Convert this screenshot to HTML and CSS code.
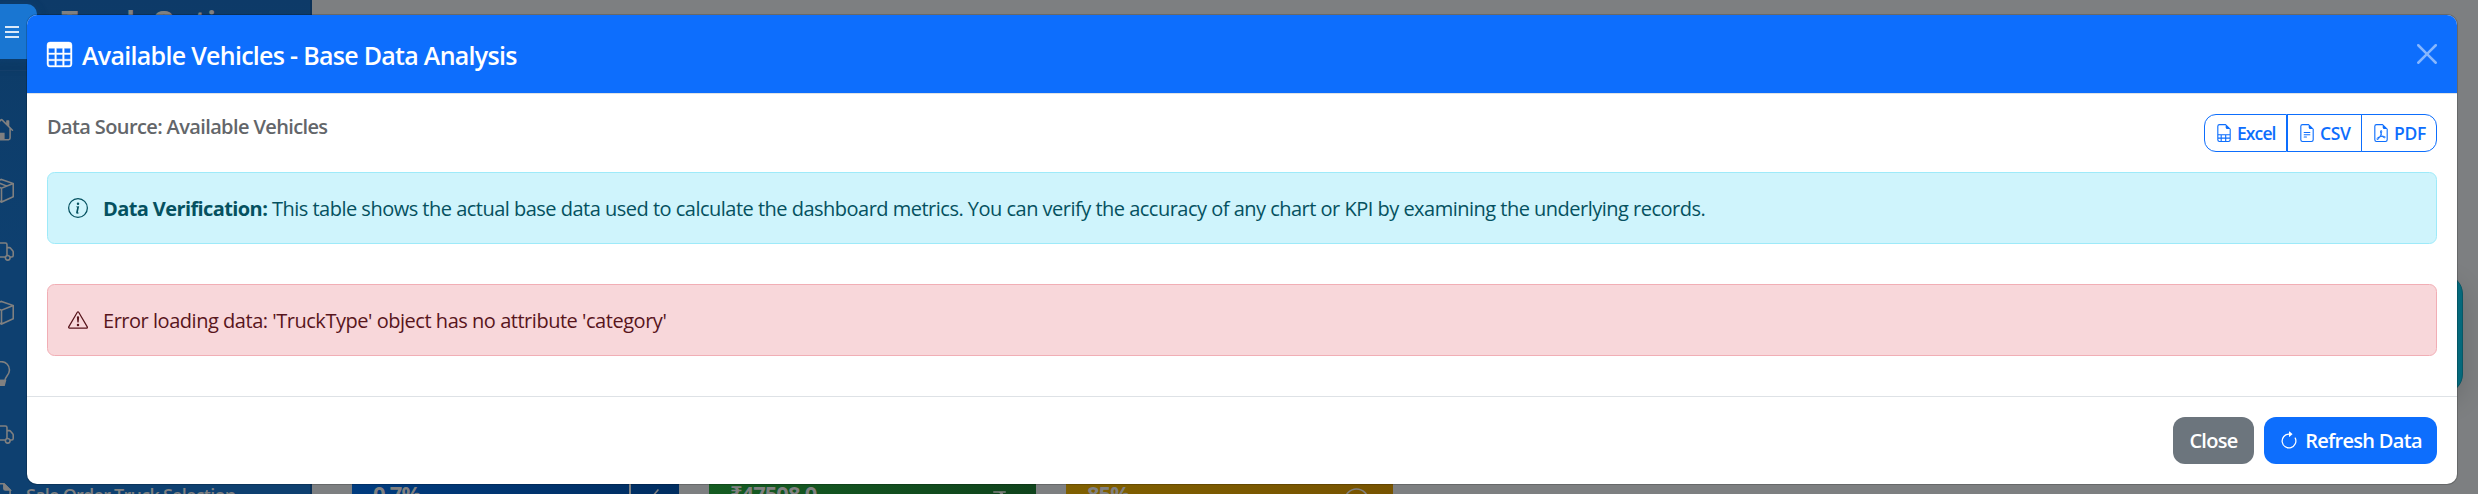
FILE: index.html
```
<!DOCTYPE html>
<html lang="en">
<head>
<meta charset="utf-8">
<title>Available Vehicles - Base Data Analysis</title>
<link rel="stylesheet" href="styles.css">
</head>
<body>
<svg class="defs" aria-hidden="true">
  <symbol id="truck" viewBox="0 0 16 16"><path d="M0 3.5A1.5 1.5 0 0 1 1.5 2h9A1.5 1.5 0 0 1 12 3.5V5h1.02a1.5 1.5 0 0 1 1.17.563l1.481 1.85a1.5 1.5 0 0 1 .329.938V10.500a1.500 1.500 0 0 1-1.500 1.500H14a2 2 0 1 1-4 0H5a2 2 0 1 1-3.998-.085A1.500 1.500 0 0 1 0 10.500zm1.294 7.456A2 2 0 0 1 4.732 11h5.536a2 2 0 0 1 .732-.732V3.500a.5.5 0 0 0-.5-.5h-9a.5.5 0 0 0-.5.5v7a.5.5 0 0 0 .294.456M12 10a2 2 0 0 1 1.732 1h.768a.5.5 0 0 0 .5-.5V8.350a.5.5 0 0 0-.11-.312l-1.480-1.850A.5.5 0 0 0 13.020 6H12zm-9 1a1 1 0 1 0 0 2 1 1 0 0 0 0-2m9 0a1 1 0 1 0 0 2 1 1 0 0 0 0-2"/></symbol>
</svg>
<div class="page">
  <aside class="sidebar">
    <div class="brand">Truck Option</div>
    <nav class="menu">
      <svg viewBox="0 0 16 16"><path d="M8.707 1.500a1 1 0 0 0-1.414 0L.646 8.146a.5.5 0 0 0 .708.708L2 8.207V13.500A1.500 1.500 0 0 0 3.500 15h9a1.500 1.500 0 0 0 1.500-1.500V8.207l.646.647a.5.5 0 0 0 .708-.708L13 5.793V2.500a.5.5 0 0 0-.5-.5h-1a.5.5 0 0 0-.5.5v1.293zM13 7.207V13.500a.5.5 0 0 1-.5.5H10V10H6v4H3.500a.5.5 0 0 1-.5-.5V7.207l5-5z"/></svg>
      <svg viewBox="0 0 16 16" class="line"><path d="M8 .9 15.500 3.500V12L8 15.400.5 12V3.500zM.5 3.500 8 6.500l7.500-3M8 6.500v8.900M4 2.200l7.500 3"/></svg>
      <svg><use href="#truck"/></svg>
      <svg viewBox="0 0 16 16" class="line"><path d="M8 .9 15.500 3.500V12L8 15.400.5 12V3.500zM.5 3.500 8 6.500l7.500-3M8 6.500v8.900"/></svg>
      <svg viewBox="0 0 16 16" class="line"><path d="M5.800 12.500C5.800 10 2.500 9 2.500 5.700a5.300 5.300 0 0 1 10.600 0C13.100 9 10.200 10 10.200 12.500z"/><path class="solid" d="M5.500 12.500h5l-.8 3H6.300z"/></svg>
      <svg><use href="#truck"/></svg>
      <svg viewBox="0 0 16 16" class="line"><path d="M9.500.5H4A1.500 1.500 0 0 0 2.500 2v12A1.500 1.500 0 0 0 4 15.500h8a1.500 1.500 0 0 0 1.500-1.500V4.500z"/><path class="solid" d="M9.500.5v3a1 1 0 0 0 1 1h3z"/></svg>
    </nav>
    <div class="menu-label">Sale Order Truck Selection</div>
  </aside>
  <main class="board">
    <section class="kpi blue"><span class="value">0.7%</span><i class="rule"></i><svg viewBox="0 0 16 16" class="line"><path d="M10.500 1 7.500 4.500"/></svg></section>
    <section class="kpi green"><span class="value">₹47508.0</span><svg viewBox="0 0 16 16"><path d="M4 3.060h2.726c1.220 0 2.120.575 2.325 1.724H4v1.051h5.051C8.855 7.001 8 7.558 6.788 7.558H4v1.317L8.437 14h2.110L6.095 8.884h.855c2.316-.018 3.465-1.476 3.688-3.049H12V4.784h-1.345c-.080-.778-.357-1.335-.793-1.732H12V2H4z"/></svg></section>
    <section class="kpi amber"><span class="value">85%</span><svg viewBox="0 0 16 16" class="line"><circle cx="8" cy="8" r="7.400"/><path d="M8 4v4"/></svg></section>
  </main>
  <div class="teal-card"></div>
  <div class="toggle"><i></i><i></i><i></i></div>
</div>

<div class="modal">
  <header class="modal-header">
    <svg class="table-icon" viewBox="0 0 16 16"><path d="M0 2a2 2 0 0 1 2-2h12a2 2 0 0 1 2 2v12a2 2 0 0 1-2 2H2a2 2 0 0 1-2-2zm15 2h-4v3h4zm0 4h-4v3h4zm0 4h-4v3h3a1 1 0 0 0 1-1zm-5 3v-3H6v3zm-5 0v-3H1v2a1 1 0 0 0 1 1zm-4-4h4V8H1zm0-4h4V4H1zm5-3v3h4V4zm4 4H6v3h4z"/></svg>
    <h5 class="title"><span>Available Vehicles - Base Data Analysis</span></h5>
    <svg class="close-icon" viewBox="0 0 16 16"><path d="M.293.293a1 1 0 0 1 1.414 0L8 6.586 14.293.293a1 1 0 1 1 1.414 1.414L9.414 8l6.293 6.293a1 1 0 0 1-1.414 1.414L8 9.414l-6.293 6.293a1 1 0 0 1-1.414-1.414L6.586 8 .293 1.707a1 1 0 0 1 0-1.414z"/></svg>
  </header>
  <div class="modal-body">
    <div class="source-row">
      <h6 class="source">Data Source: Available Vehicles</h6>
      <div class="exports">
        <button class="excel"><svg viewBox="0 0 16 16"><path d="M14 14V4.500L9.500 0H4a2 2 0 0 0-2 2v12a2 2 0 0 0 2 2h8a2 2 0 0 0 2-2M9.500 3A1.500 1.500 0 0 0 11 4.500h2V9H3V2a1 1 0 0 1 1-1h5.500zM3 12v-2h2v2zm0 1h2v2H4a1 1 0 0 1-1-1zm3 2v-2h3v2zm4 0v-2h3v1a1 1 0 0 1-1 1zm3-3h-3v-2h3zm-7 0v-2h3v2z"/></svg><span>Excel</span></button>
        <button class="csv"><svg viewBox="0 0 16 16"><path d="M5.500 7a.5.5 0 0 0 0 1h5a.5.5 0 0 0 0-1zM5 9.500a.5.5 0 0 1 .5-.5h5a.5.5 0 0 1 0 1h-5a.5.5 0 0 1-.5-.5m0 2a.5.5 0 0 1 .5-.5h2a.5.5 0 0 1 0 1h-2a.5.5 0 0 1-.5-.5"/><path d="M9.500 0H4a2 2 0 0 0-2 2v12a2 2 0 0 0 2 2h8a2 2 0 0 0 2-2V4.500zm0 1v2A1.500 1.500 0 0 0 11 4.500h2V14a1 1 0 0 1-1 1H4a1 1 0 0 1-1-1V2a1 1 0 0 1 1-1z"/></svg><span>CSV</span></button>
        <button class="pdf"><svg viewBox="0 0 16 16"><path d="M14 14V4.500L9.500 0H4a2 2 0 0 0-2 2v12a2 2 0 0 0 2 2h8a2 2 0 0 0 2-2M9.500 3A1.500 1.500 0 0 0 11 4.500h2V14a1 1 0 0 1-1 1H4a1 1 0 0 1-1-1V2a1 1 0 0 1 1-1h5.500z"/><path d="M4.603 14.087a.8.8 0 0 1-.438-.420c-.195-.388-.130-.776.080-1.102.198-.307.526-.568.897-.787a7.700 7.700 0 0 1 1.482-.645 20 20 0 0 0 1.062-2.227 7.300 7.300 0 0 1-.430-1.295c-.086-.400-.119-.796-.046-1.136.075-.354.274-.672.650-.823.192-.077.400-.120.602-.077a.7.7 0 0 1 .477.365c.088.164.120.356.127.538.007.188-.012.396-.047.614-.084.510-.270 1.134-.520 1.794a11 11 0 0 0 .980 1.686 5.800 5.800 0 0 1 1.334.050c.364.066.734.195.960.465.120.144.193.320.200.518.007.192-.047.382-.138.563a1.040 1.040 0 0 1-.354.416.86.86 0 0 1-.510.138c-.331-.014-.654-.196-.933-.417a5.700 5.700 0 0 1-.911-.950 11.700 11.700 0 0 0-1.997.406 11.300 11.300 0 0 1-1.020 1.510c-.292.350-.609.656-.927.787a.8.8 0 0 1-.580.029m1.379-1.901q-.250.115-.459.238c-.328.194-.541.383-.647.547-.094.145-.096.250-.040.361q.016.032.026.044l.035-.012c.137-.056.355-.235.635-.572a8 8 0 0 0 .450-.606m1.640-1.330a13 13 0 0 1 1.010-.193 12 12 0 0 1-.510-.858 21 21 0 0 1-.500 1.050zm2.446.450q.226.245.435.410c.240.190.407.253.498.256a.1.1 0 0 0 .070-.015.3.3 0 0 0 .094-.125.440.440 0 0 0 .059-.200.1.1 0 0 0-.026-.063c-.052-.062-.200-.152-.518-.209a4 4 0 0 0-.612-.053zM8.078 7.800a7 7 0 0 0 .200-.828q.046-.282.038-.465a.6.6 0 0 0-.032-.198.5.5 0 0 0-.145.040c-.087.035-.158.106-.196.283-.040.192-.030.469.046.822q.036.167.090.346z"/></svg><span>PDF</span></button>
      </div>
    </div>
    <div class="alert info">
      <svg viewBox="0 0 16 16"><path d="M8 15A7 7 0 1 1 8 1a7 7 0 0 1 0 14m0 1A8 8 0 1 0 8 0a8 8 0 0 0 0 16"/><path d="m8.930 6.588-2.290.287-.082.380.450.083c.294.070.352.176.288.469l-.738 3.468c-.194.897.105 1.319.808 1.319.545 0 1.178-.252 1.465-.598l.088-.416c-.200.176-.492.246-.686.246-.275 0-.375-.193-.304-.533zM9 4.500a1 1 0 1 1-2 0 1 1 0 0 1 2 0"/></svg>
      <p><strong>Data Verification:</strong> <span>This table shows the actual base data used to calculate the dashboard metrics. You can verify the accuracy of any chart or KPI by examining the underlying records.</span></p>
    </div>
    <div class="alert danger">
      <svg viewBox="0 0 16 16"><path d="M7.938 2.016A.130.130 0 0 1 8.002 2a.130.130 0 0 1 .063.016.150.150 0 0 1 .054.057l6.857 11.667c.036.060.035.124.002.183a.2.2 0 0 1-.054.060.1.1 0 0 1-.066.017H1.146a.1.1 0 0 1-.066-.017.2.2 0 0 1-.054-.060.180.180 0 0 1 .002-.183L7.884 2.073a.150.150 0 0 1 .054-.057m1.044-.450a1.130 1.130 0 0 0-1.960 0L.165 13.233c-.457.778.091 1.767.980 1.767h13.713c.889 0 1.438-.990.980-1.767z"/><path d="M7.002 12a1 1 0 1 1 2 0 1 1 0 0 1-2 0M7.100 5.995a.905.905 0 1 1 1.800 0l-.350 3.507a.552.552 0 0 1-1.100 0z"/></svg>
      <p><span>Error loading data: 'TruckType' object has no attribute 'category'</span></p>
    </div>
  </div>
  <footer class="modal-footer">
    <button class="btn close"><span>Close</span></button>
    <button class="btn refresh"><svg viewBox="0 0 16 16"><path d="M8 3a5 5 0 1 0 4.546 2.914.5.5 0 0 1 .908-.417A6 6 0 1 1 8 2z"/><path d="M8 4.466V.534a.250.250 0 0 1 .410-.192l2.360 1.966c.120.100.120.284 0 .384L8.410 4.658A.250.250 0 0 1 8 4.466"/></svg><span>Refresh Data</span></button>
  </footer>
</div>
</body>
</html>
```
FILE: styles.css
```
* { box-sizing: border-box; }
html, body { margin: 0; height: 494px; overflow: hidden; }
body {
  position: relative;
  background: #7d7f81;
  font-family: "Open Sans", "Noto Sans", sans-serif;
  font-size: 20px;
}
svg { fill: currentColor; display: block; flex: none; }
.defs { position: absolute; width: 0; height: 0; }
h5, h6, p { margin: 0; }
button { font: inherit; letter-spacing: inherit; margin: 0; cursor: pointer; }
.line { fill: none; stroke: currentColor; stroke-width: 1; }
.line .solid { fill: currentColor; }

/* Dimmed dashboard */
.page { display: flex; height: 494px; overflow: hidden; position: relative; }
.sidebar {
  width: 312px;
  flex: none;
  position: relative;
  background: linear-gradient(#0d3a68 0, #0d3c69 70px, #0e4070 260px, #0e4070 100%);
  border-right: 2px solid #0b3158;
  color: #808080;
  overflow: hidden;
}
.brand {
  height: 71px;
  padding: 3px 0 0 61px;
  font-size: 29.5px;
  font-weight: 700;
  line-height: 38px;
  border-bottom: 1px solid #15416e;
}
.menu { padding-top: 46px; margin-left: -11px; display: flex; flex-direction: column; gap: 36px; }
.menu svg { width: 25px; height: 25px; }
.menu-label { position: absolute; left: 26px; top: 482px; font-size: 18px; font-weight: 600; letter-spacing: -.75px; line-height: 26px; white-space: nowrap; }
.board { display: flex; gap: 30px; padding: 400px 0 0 40px; }
.kpi { width: 327px; height: 130px; display: flex; padding: 80px 20px 0 21px; color: #808080; }
.kpi .value { flex: 1; font-size: 22px; font-weight: 700; line-height: 26px; letter-spacing: -1px; }
.kpi svg { width: 25px; height: 25px; margin-top: 8px; margin-right: 4px; }
.kpi .rule { width: 2px; height: 30px; background: #808080; margin-right: 11px; }
.kpi.blue svg { margin-right: -8px; }
.blue { background: linear-gradient(100deg, #003c80, #002d60); }
.green { background: linear-gradient(100deg, #155d22, #0f431c); }
.amber { background: linear-gradient(100deg, #806000, #775300); }
.teal-card { position: absolute; left: 2140px; top: 274px; width: 323px; height: 120px; border-radius: 20px; background: #05697c; border: 1px solid #075766; box-shadow: 0 8px 24px rgba(0,0,0,.15); }
.toggle {
  position: absolute;
  left: -10px;
  top: 4px;
  width: 47px;
  height: 55px;
  padding: 22px 0 0 15px;
  display: flex;
  flex-direction: column;
  gap: 3px;
  border-radius: 10px;
  background: #1976d2;
  box-shadow: 0 4px 14px rgba(0,0,0,.2), 0 2px 10px rgba(25,118,210,.3);
}
.toggle i { width: 14px; height: 2px; background: #dbe9f8; }

/* Dialog */
.modal {
  position: absolute;
  left: 27px;
  top: 15px;
  width: 2430px;
  height: 469px;
  display: flex;
  flex-direction: column;
  background: #fff;
  border-radius: 10px;
  overflow: hidden;
  box-shadow: 0 0 0 1px rgba(0,0,0,.18);
}
.modal-header {
  display: flex;
  align-items: center;
  height: 79px;
  padding: 0 20px;
  background: #0d6efd;
  border-bottom: 1px solid #dee2e6;
  color: #fff;
}
.table-icon { width: 25px; height: 25px; stroke: currentColor; stroke-width: .25; overflow: visible; }
.title { flex: 1; margin-left: 10px; padding-top: 2px; font-size: 25px; font-weight: 600; line-height: 38px; letter-spacing: -.71px; }
.close-icon { width: 20px; height: 20px; opacity: .5; }
.modal-body { flex: 1; padding: 20px; }
.source-row { display: flex; justify-content: space-between; height: 58px; }
.source { font-size: 20px; font-weight: 600; line-height: 24px; padding-top: 1px; letter-spacing: -.62px; color: #63666a; }
.exports { display: flex; height: 38px; width: 233px; color: #0d6efd; font-size: 17.5px; font-weight: 600; letter-spacing: -.3px; }
.exports button {
  display: flex;
  align-items: center;
  gap: 4px;
  padding: 0 0 0 10px;
  border: 1px solid #0d6efd;
  background: #fff;
  color: inherit;
  white-space: nowrap;
}
.exports svg { width: 18px; height: 18px; }
.exports .excel { width: 83px; border-radius: 12px 0 0 12px; letter-spacing: -.9px; }
.csv { width: 75px; }
.exports .pdf { width: 76px; margin-left: -1px; border-radius: 0 12px 12px 0; }
.alert {
  display: flex;
  align-items: center;
  height: 72px;
  padding: 0 20px;
  border: 1px solid;
  border-radius: 7.5px;
}
.alert svg { width: 20px; height: 20px; margin-right: 15px; margin-top: -1px; }
.alert p { line-height: 30px; padding-top: 2px; white-space: nowrap; letter-spacing: -.51px; }
.alert strong { letter-spacing: -.6px; }
.alert.danger p { letter-spacing: -.47px; }
.info { background: #cff4fc; border-color: #9eeaf9; color: #055160; }
.danger { background: #f8d7da; border-color: #f1aeb5; color: #58151c; margin-top: 40px; }
.modal-footer {
  display: flex;
  justify-content: flex-end;
  gap: 10px;
  height: 88px;
  padding: 20px;
  border-top: 1px solid #dee2e6;
}
.btn {
  display: flex;
  align-items: center;
  justify-content: center;
  gap: 6px;
  height: 47px;
  padding: 0;
  border: 0;
  border-radius: 12px;
  color: #fff;
  font-weight: 600;
  letter-spacing: -.7px;
  white-space: nowrap;
}
.close { width: 81px; background: #6c757d; }
.refresh { width: 173px; background: #0d6efd; }
.refresh svg { width: 20px; height: 20px; }
```
